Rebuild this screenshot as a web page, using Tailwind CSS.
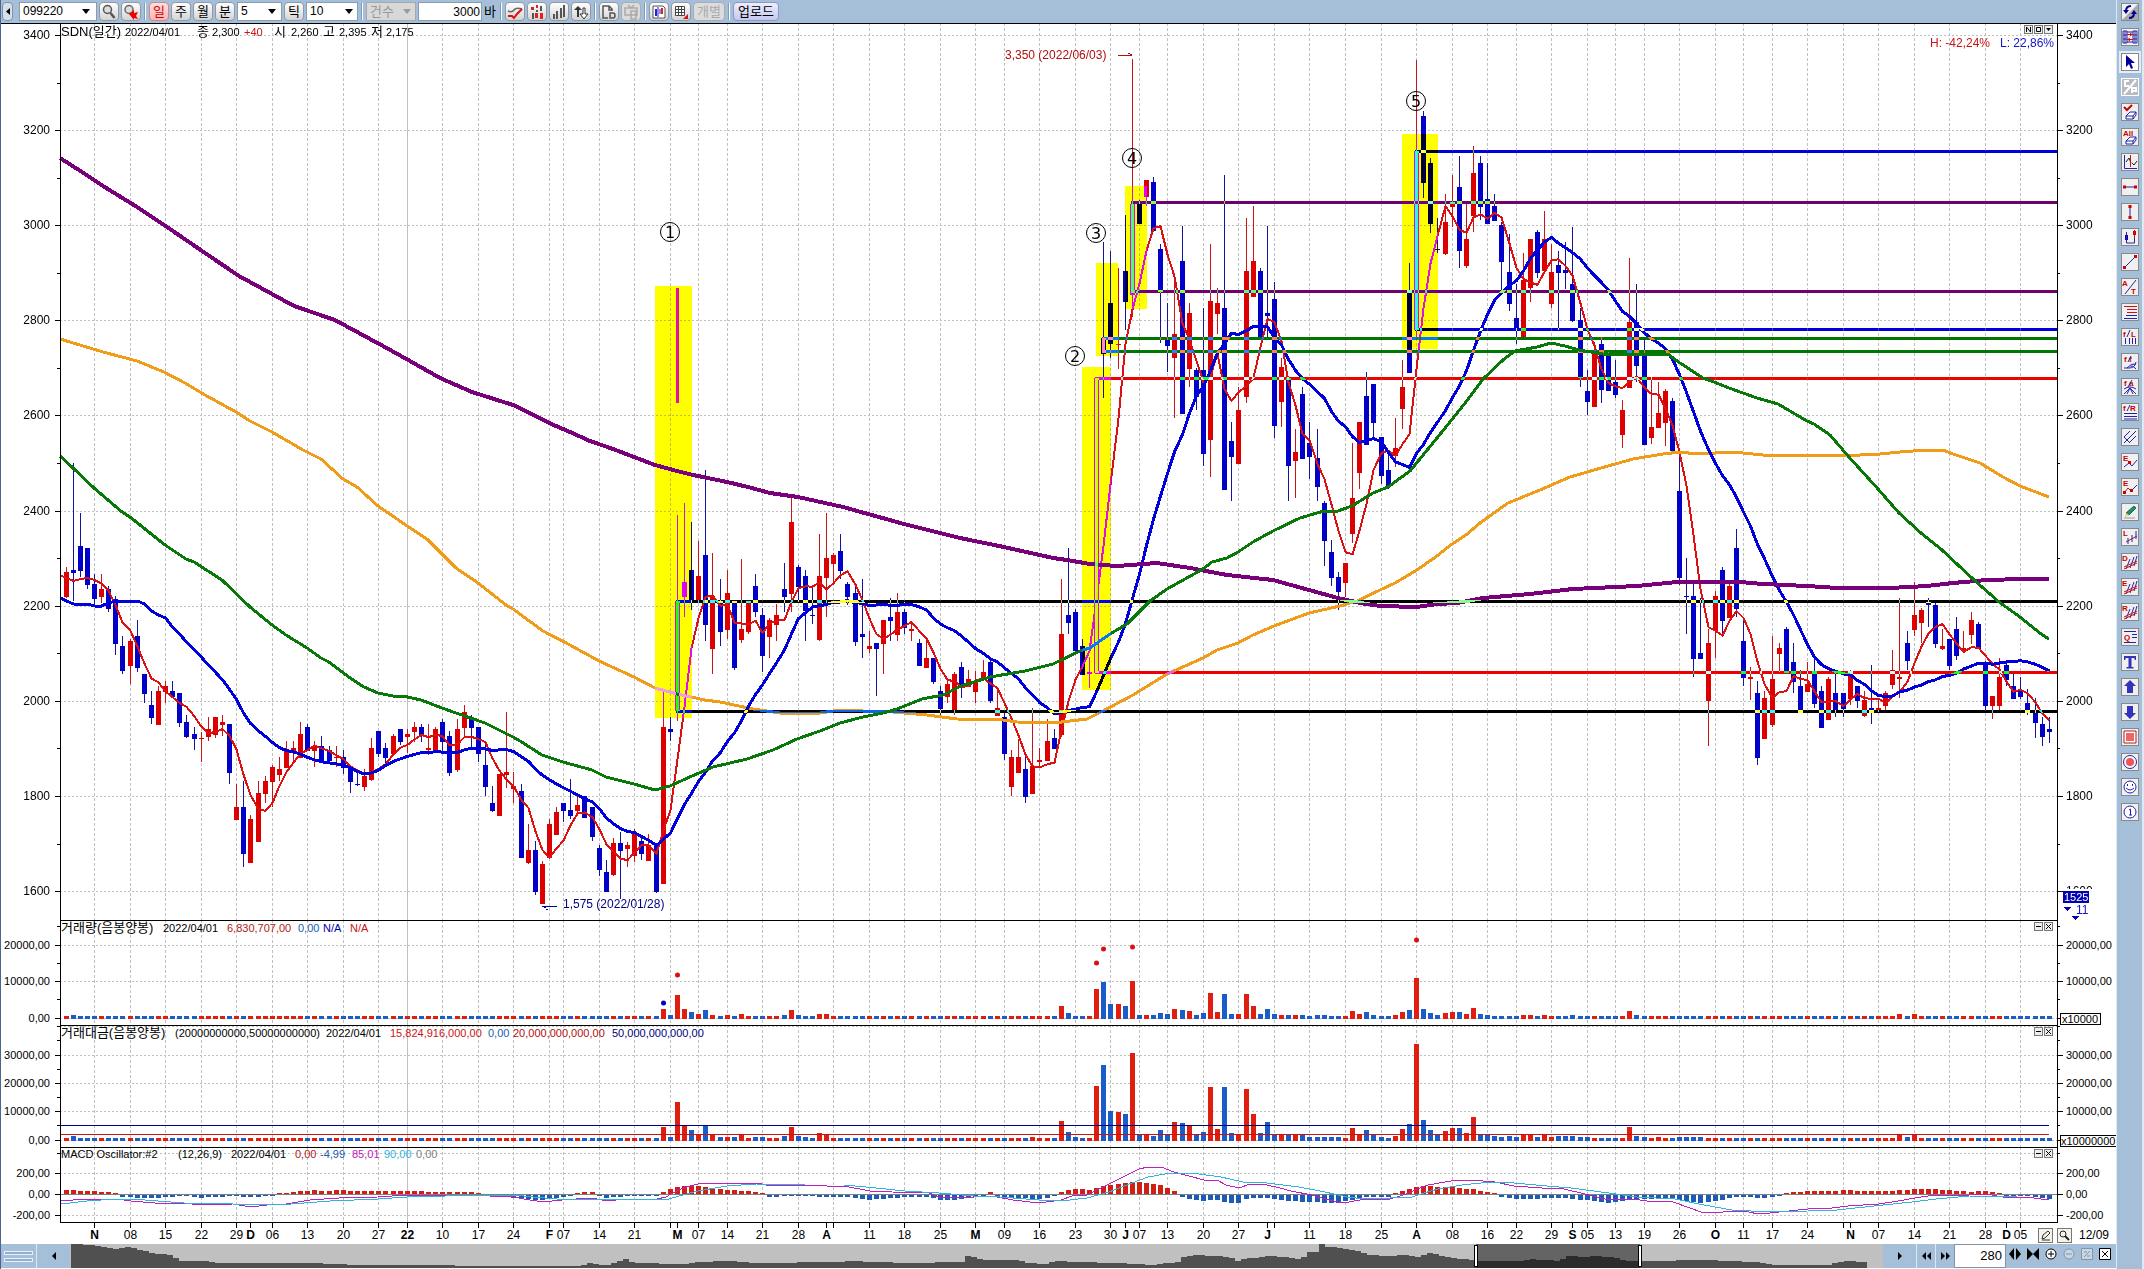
<!DOCTYPE html>
<html lang="ko">
<head>
    <meta charset="UTF-8">
    <meta name="viewport" content="width=device-width, initial-scale=1.0">
    <title>SDN 일간 차트</title>
    <script src="https://cdn.jsdelivr.net/npm/@tailwindcss/browser@4"></script>
</head>
<body class="flex min-h-screen items-stretch bg-white text-[11px] text-black [font-family:'Liberation_Sans','Noto_Sans_CJK_KR',sans-serif]">

    <main class="flex min-w-0 flex-1 flex-col border-l border-[#4a6590]">

        <!-- Toolbar -->
        <header class="flex h-[23px] items-center gap-[2px] bg-[#a5bfd9] pl-px text-[12px] leading-[17px]">
            <button aria-label="접기" class="mr-1 flex h-[19px] w-[11px] shrink-0 items-center justify-center rounded-sm border border-[#7d93ab] bg-[#d5e0ec]"><svg class="h-[7px] w-1" viewBox="0 0 4 7"><path d="M4 0v7L0 3.5z"/></svg></button>
            <label class="relative flex shrink-0"><span class="sr-only">종목코드</span>
                <select class="h-[19px] w-[78px] appearance-none border border-[#8a9cb0] bg-white pl-[3px]"><option>099220</option></select>
                <svg class="pointer-events-none absolute top-[7px] right-[7px] h-[5px] w-2" viewBox="0 0 8 5"><path d="M0 0h8L4 5z"/></svg></label>
            <button aria-label="종목검색" class="flex h-[19px] w-5 shrink-0 items-center justify-center rounded-sm border border-[#8e9aa8] bg-linear-to-b from-white to-[#d4d4d4]"><svg class="size-4" viewBox="0 0 16 16" fill="#dcdcdc" stroke="#555"><circle cx="6.5" cy="5.5" r="4" stroke-width="1.5"/><path d="M9.5 9l4 5" stroke-width="2.5"/></svg></button>
            <button aria-label="관심종목" class="flex h-[19px] w-5 shrink-0 items-center justify-center rounded-sm border border-[#8e9aa8] bg-linear-to-b from-white to-[#d4d4d4]"><svg class="size-4" viewBox="0 0 16 16"><circle cx="6" cy="5.500" r="4" fill="#dcdcdc" stroke="#666" stroke-width="1.500"/><path d="M6 10l5-4v3l4-1-2 4 2 3-4-1v2z" fill="#e00"/></svg></button>
            <span class="mx-px h-[17px] w-[2px] shrink-0 border-l border-[#7f9ab8] bg-white"></span>
            <button class="h-[19px] w-5 shrink-0 rounded-sm border border-[#c98a8a] bg-linear-to-b from-[#ffdede] to-[#ffb4b4] text-center text-[13px] text-[#c00]">일</button>
            <button class="h-[19px] w-5 shrink-0 rounded-sm border border-[#8e9aa8] bg-linear-to-b from-white to-[#d4d4d4] text-center text-[13px]">주</button>
            <button class="h-[19px] w-5 shrink-0 rounded-sm border border-[#8e9aa8] bg-linear-to-b from-white to-[#d4d4d4] text-center text-[13px]">월</button>
            <button class="h-[19px] w-5 shrink-0 rounded-sm border border-[#8e9aa8] bg-linear-to-b from-white to-[#d4d4d4] text-center text-[13px]">분</button>
            <label class="relative flex shrink-0"><span class="sr-only">분 단위</span>
                <select class="h-[19px] w-[45px] appearance-none border border-[#8a9cb0] bg-white pl-[3px]"><option>5</option></select>
                <svg class="pointer-events-none absolute top-[7px] right-[6px] h-[5px] w-2" viewBox="0 0 8 5"><path d="M0 0h8L4 5z"/></svg></label>
            <button class="h-[19px] w-5 shrink-0 rounded-sm border border-[#8e9aa8] bg-linear-to-b from-white to-[#d4d4d4] text-center text-[13px]">틱</button>
            <label class="relative flex shrink-0"><span class="sr-only">틱 단위</span>
                <select class="h-[19px] w-[52px] appearance-none border border-[#8a9cb0] bg-white pl-[3px]"><option>10</option></select>
                <svg class="pointer-events-none absolute top-[7px] right-[5px] h-[5px] w-2" viewBox="0 0 8 5"><path d="M0 0h8L4 5z"/></svg></label>
            <span class="mx-px h-[17px] w-[2px] shrink-0 border-l border-[#7f9ab8] bg-white"></span>
            <label class="relative flex shrink-0"><span class="sr-only">조회 기준</span>
                <select disabled class="h-[19px] w-[50px] appearance-none border border-[#a8a8a8] bg-[#d8d8d8] pl-[3px] text-[13px] text-[#999]"><option>건수</option></select>
                <svg class="pointer-events-none absolute top-[7px] right-[5px] h-[5px] w-2" viewBox="0 0 8 5"><path d="M0 0h8L4 5z" fill="#999"/></svg></label>
            <input id="bars" type="text" value="3000" class="h-[19px] w-16 shrink-0 border border-[#8a9cb0] bg-white pr-px text-right">
            <label for="bars" class="w-[13px] shrink-0 text-[13px]">바</label>
            <span class="mx-px h-[17px] w-[2px] shrink-0 border-l border-[#7f9ab8] bg-white"></span>
            <button aria-label="추세선" class="flex h-[19px] w-5 shrink-0 items-center justify-center rounded-sm border border-[#8e9aa8] bg-linear-to-b from-white to-[#d4d4d4]"><svg class="size-4" viewBox="0 0 16 16" fill="none"><path d="M1 7q4 2 6-1t8-1" stroke="#666" stroke-width="1.500"/><path d="M1 12h4l2 2 3-4 5-5" stroke="#d11" stroke-width="2"/></svg></button>
            <button aria-label="봉차트" class="flex h-[19px] w-5 shrink-0 items-center justify-center rounded-sm border border-[#8e9aa8] bg-linear-to-b from-white to-[#d4d4d4]"><svg class="size-4" viewBox="0 0 16 16"><path d="M3 9h2v6H3zM7 6h2v2H7zM11 2h2v5h-2z" fill="#555"/><path d="M2 3h3v3H2zM6 9h3v5H6zM11 9h3v6h-3zM7 1h2v3H7z" fill="#d22"/></svg></button>
            <button aria-label="거래량" class="flex h-[19px] w-5 shrink-0 items-center justify-center rounded-sm border border-[#8e9aa8] bg-linear-to-b from-white to-[#d4d4d4]"><svg class="size-4" viewBox="0 0 16 16" fill="#555"><path d="M2 10h2v5H2zM5 7h2v8H5zM9 4h2v10H9zM12 1h2v12h-2z"/></svg></button>
            <button aria-label="상하전환" class="flex h-[19px] w-5 shrink-0 items-center justify-center rounded-sm border border-[#8e9aa8] bg-linear-to-b from-white to-[#d4d4d4]"><svg class="size-4" viewBox="0 0 16 16"><path d="M5 2l4 4H6v7H4V6H1z" fill="#333"/><path d="M10 4h2v6h3l-4 5-4-5h3z" fill="#fff" stroke="#333"/></svg></button>
            <span class="mx-px h-[17px] w-[2px] shrink-0 border-l border-[#7f9ab8] bg-white"></span>
            <button aria-label="문서" class="flex h-[19px] w-5 shrink-0 items-center justify-center rounded-sm border border-[#8e9aa8] bg-linear-to-b from-white to-[#d4d4d4]"><svg class="size-4" viewBox="0 0 16 16" fill="none" stroke="#555" stroke-width="1.500"><path d="M7 14H2V2h6l3 3v2M8 2v4h3M9 9h3q2 0 2 2.500T12 14H9z"/></svg></button>
            <button disabled aria-label="방송" class="flex h-[19px] w-5 shrink-0 items-center justify-center rounded-sm border border-[#a3aebb] bg-[#dcdcdc]"><svg class="size-4" viewBox="0 0 16 16" fill="none" stroke="#aaa" stroke-width="1.500"><path d="M2 4h12v7H2zM5 1l3 3 3-3M8 7h5v8H8zM8 11h5"/></svg></button>
            <span class="mx-px h-[17px] w-[2px] shrink-0 border-l border-[#7f9ab8] bg-white"></span>
            <button aria-label="차트설정" class="flex h-[19px] w-5 shrink-0 items-center justify-center rounded-sm border border-[#8e9aa8] bg-linear-to-b from-white to-[#d4d4d4]"><svg class="size-4" viewBox="0 0 16 16"><path d="M2 2h10l2 2v10H2z" fill="#fff" stroke="#555"/><path d="M4 5h2v7H4z" fill="#22c"/><path d="M7 3v10M9 5v5" stroke="#22c"/><path d="M10 4h2v6h-2z" fill="#d22"/></svg></button>
            <button aria-label="표 보기" class="flex h-[19px] w-5 shrink-0 items-center justify-center rounded-sm border border-[#8e9aa8] bg-linear-to-b from-white to-[#d4d4d4]"><svg class="size-4" viewBox="0 0 16 16"><path d="M2.500 2.500h9v9h-9zM2.500 5.500h9M2.500 8.500h9M5.500 2.500v9M8.500 2.500v9" fill="#fff" stroke="#444"/><path d="M15 10v5h-5z" fill="#d11"/></svg></button>
            <button disabled class="h-[19px] w-8 shrink-0 rounded-sm border border-[#a3aebb] bg-[#dcdcdc] text-center text-[13px] text-[#aaa]">개별</button>
            <span class="mx-px h-[17px] w-[2px] shrink-0 border-l border-[#7f9ab8] bg-white"></span>
            <button class="h-[19px] w-[46px] shrink-0 rounded-sm border border-[#8f96c4] bg-linear-to-b from-[#eef] to-[#c3c8ee] text-center text-[13px]">업로드</button>
        </header>

        <!-- Price -->
        <section class="relative">
            <svg id="price" class="isolate block h-auto w-full text-[12px]" viewBox="1 23 2115 897" shape-rendering="crispEdges"></svg>
            <div class="absolute top-[2px] right-[63px] flex gap-px">
                <button aria-label="N" class="size-[9px] border border-[#777] bg-[#eee]"><svg class="size-full" viewBox="0 0 7 7" fill="none" stroke="#000"><path d="M1.500 6V1l4 5V1"/></svg></button>
                <button aria-label="최대화" class="size-[9px] border border-[#777] bg-[#eee]"><svg class="size-full" viewBox="0 0 7 7" fill="none" stroke="#000"><path d="M1.500 1.500h4v4h-4z"/></svg></button>
                <button aria-label="메뉴" class="size-[9px] border border-[#777] bg-[#eee]"><svg class="size-full" viewBox="0 0 7 7"><path d="M1 2h5L3.500 5z"/></svg></button>
            </div>
        </section>

        <!-- Volume -->
        <section class="relative">
            <svg id="volume" class="block h-auto w-full" viewBox="1 920 2115 105" shape-rendering="crispEdges"></svg>
            <div class="absolute top-[2px] right-[63px] flex gap-px">
                <button aria-label="최소화" class="size-[9px] border border-[#777] bg-[#eee]"><svg class="size-full" viewBox="0 0 7 7" stroke="#000"><path d="M1 3.500h5"/></svg></button>
                <button aria-label="닫기" class="size-[9px] border border-[#777] bg-[#eee]"><svg class="size-full" viewBox="0 0 7 7" stroke="#000"><path d="M1 1l5 5M6 1L1 6"/></svg></button>
            </div>
        </section>

        <!-- Turnover -->
        <section class="relative">
            <svg id="turnover" class="block h-auto w-full" viewBox="1 1025 2115 122" shape-rendering="crispEdges"></svg>
            <div class="absolute top-[2px] right-[63px] flex gap-px">
                <button aria-label="최소화" class="size-[9px] border border-[#777] bg-[#eee]"><svg class="size-full" viewBox="0 0 7 7" stroke="#000"><path d="M1 3.500h5"/></svg></button>
                <button aria-label="닫기" class="size-[9px] border border-[#777] bg-[#eee]"><svg class="size-full" viewBox="0 0 7 7" stroke="#000"><path d="M1 1l5 5M6 1L1 6"/></svg></button>
            </div>
        </section>

        <!-- MACD and time axis -->
        <section class="relative">
            <svg id="macd" class="block h-auto w-full" viewBox="1 1147 2115 97" shape-rendering="crispEdges"></svg>
            <div class="absolute top-[2px] right-[63px] flex gap-px">
                <button aria-label="최소화" class="size-[9px] border border-[#777] bg-[#eee]"><svg class="size-full" viewBox="0 0 7 7" stroke="#000"><path d="M1 3.500h5"/></svg></button>
                <button aria-label="닫기" class="size-[9px] border border-[#777] bg-[#eee]"><svg class="size-full" viewBox="0 0 7 7" stroke="#000"><path d="M1 1l5 5M6 1L1 6"/></svg></button>
            </div>
            <div class="absolute right-[44px] bottom-px flex gap-1">
                <button aria-label="그리기" class="size-[15px] border border-[#777] bg-[#f4f4ea]"><svg class="size-full" viewBox="0 0 13 13" fill="none" stroke="#333"><path d="M3 10l1-4 5-4 2 2-5 5zM3 11h8"/></svg></button>
                <button aria-label="돋보기" class="size-[15px] border border-[#777] bg-[#f4f4ea]"><svg class="size-full" viewBox="0 0 13 13" fill="none" stroke="#222"><circle cx="5" cy="5" r="3"/><path d="M7 7l4 4" stroke-width="2"/></svg></button>
            </div>
        </section>

        <!-- Range scroller -->
        <footer class="flex h-[25px] items-stretch border-b border-white bg-[#a5bfd9]">
            <div class="flex w-9 flex-col justify-center gap-[3px] border-r border-[#dce8f4] px-[3px]">
                <span class="h-1 border border-[#e8f0fa] bg-[#8fb0d4]"></span>
                <span class="h-1 border border-[#e8f0fa] bg-[#8fb0d4]"></span>
            </div>
            <button aria-label="왼쪽으로" class="flex w-[33px] items-center justify-center"><svg class="h-2 w-1" viewBox="0 0 4 8"><path d="M4 0v8L0 4z"/></svg></button>
            <svg id="overview" class="h-full min-w-0 flex-1 bg-[#c0c0c0]" viewBox="70 1244 1813 24" preserveAspectRatio="none" shape-rendering="crispEdges"></svg>
            <button aria-label="오른쪽으로" class="flex w-[33px] items-center justify-center"><svg class="h-2 w-1" viewBox="0 0 4 8"><path d="M0 0v8l4-4z"/></svg></button>
            <button aria-label="뒤로" class="flex w-[19px] items-center justify-center border-l border-[#dce8f4]"><svg class="h-2 w-[9px]" viewBox="0 0 9 8"><path d="M4 0v8L0 4zM9 0v8L5 4z"/></svg></button>
            <button aria-label="앞으로" class="flex w-[19px] items-center justify-center border-l border-[#dce8f4]"><svg class="h-2 w-[9px]" viewBox="0 0 9 8"><path d="M0 0v8l4-4zM5 0v8l4-4z"/></svg></button>
            <input aria-label="표시 봉 수" type="text" value="280" class="w-[52px] border border-[#7f93a8] bg-white pr-[3px] text-right text-[13px]">
            <div class="mr-[2px] flex pb-1">
                <button aria-label="넓게" class="flex w-[18px] items-center justify-center"><svg class="size-3" viewBox="0 0 12 12"><path d="M5 0v12L0 6zM7 0v12l5-6z"/></svg></button>
                <button aria-label="좁게" class="flex w-[18px] items-center justify-center"><svg class="size-3" viewBox="0 0 12 12"><path d="M0 0v12l6-6zM12 0v12L6 6z"/></svg></button>
                <button aria-label="확대" class="flex w-[18px] items-center justify-center"><svg class="size-3" viewBox="0 0 12 12" fill="#fff" stroke="#000"><circle cx="6" cy="6" r="5"/><path d="M3 6h6M6 3v6"/></svg></button>
                <button disabled aria-label="축소" class="flex w-[18px] items-center justify-center"><svg class="size-3" viewBox="0 0 12 12" fill="#c6d6e6" stroke="#8395a8"><circle cx="6" cy="6" r="5"/><path d="M3 6h6"/></svg></button>
                <button disabled aria-label="되돌리기" class="flex w-[18px] items-center justify-center"><svg class="size-3" viewBox="0 0 12 12" fill="#c6d6e6" stroke="#8395a8"><path d="M.5.500h11v11H.5zM3 9l6-6M3 4h3M6 8h3"/></svg></button>
                <button aria-label="닫기" class="flex w-[18px] items-center justify-center"><svg class="size-3" viewBox="0 0 12 12" fill="#fff" stroke="#000"><path d="M.5.500h11v11H.5zM3 3l6 6M9 3L3 9"/></svg></button>
            </div>
        </footer>
    </main>

    <!-- Drawing tools -->
    <aside id="tools" class="flex w-7 shrink-0 flex-col items-center gap-[7px] border-r-2 border-l border-[#dfe9f3] bg-[#a5bfd9] pt-[3px]"></aside>

    <script>
        // colour, high, body top, body bottom, low (chart units)
        const candles = `
r,567,572,597,598 b,463,570,573,601 b,513,546,571,577 b,548,548,585,589 b,574,584,599,604 r,574,589,597,603 b,586,589,609,612 b,596,599,644,655 b,636,646,671,674 r,639,641,666,684
b,620,636,668,672 b,674,674,694,703 b,691,705,718,724 r,686,691,725,725 r,681,686,692,703 b,681,691,697,698 b,693,693,723,727 b,715,722,737,738 b,727,734,739,750 r,732,738,739,762
r,717,729,737,741 r,717,717,735,738 r,715,722,725,736 b,724,724,773,784 r,784,807,820,820 b,781,807,854,867 r,815,819,863,863 r,781,793,842,842 r,776,781,794,803 r,765,767,782,807
r,757,769,775,781 r,741,749,768,768 r,741,748,751,763 r,722,734,758,758 b,724,727,751,751 r,741,746,751,767 b,736,746,763,763 b,746,750,761,761 r,746,757,758,767 b,750,757,768,774
b,767,768,782,793 b,770,784,785,786 r,769,776,787,791 r,738,748,780,781 b,731,731,754,757 b,743,748,758,763 r,734,736,754,754 b,729,729,742,745 r,729,734,737,753 r,722,727,732,742
b,724,727,735,742 r,724,748,750,755 r,727,729,753,753 b,719,722,742,752 b,731,736,773,776 r,719,729,770,772 r,705,712,728,736 b,715,719,728,747 b,727,727,754,762 b,741,765,787,796
b,786,803,811,812 r,774,774,816,816 r,712,772,775,788 r,772,786,789,803 b,784,791,858,858 r,824,850,863,864 b,841,850,892,895 r,861,864,904,904 r,819,824,858,858 r,807,812,835,835
b,803,803,811,822 b,779,810,816,819 r,797,805,811,813 b,796,796,818,818 b,807,807,837,841 b,845,848,870,876 b,860,872,892,892 r,838,843,875,876 b,832,843,851,899 r,842,845,849,867
r,829,832,856,862 b,837,841,854,860 r,834,845,861,861 b,844,844,892,893 r,691,727,884,884 b,717,729,732,741 r,515,601,711,721 r,503,582,597,617 b,522,570,600,610 r,541,576,600,603
b,470,555,625,641 r,553,596,649,674 b,579,601,632,646 r,570,593,630,639 b,601,601,668,670 r,559,629,640,643 r,601,601,632,634 b,574,586,612,617 b,608,615,656,672 r,618,620,637,658
r,604,615,625,641 b,563,589,597,612 r,495,522,594,612 b,565,567,587,602 b,570,576,611,641 b,586,615,616,624 r,534,576,640,641 r,513,558,578,617 r,553,555,564,582 b,534,551,571,579
b,582,584,597,605 b,586,593,642,646 b,579,634,637,658 r,631,646,649,653 b,643,643,649,696 r,620,620,644,674 b,598,617,621,641 r,593,612,635,641 b,609,612,628,634 r,622,629,631,641
b,639,643,666,666 r,638,658,668,668 b,658,658,682,684 b,686,691,709,715 r,679,684,697,703 r,672,674,710,715 b,662,667,685,698 r,670,679,687,687 r,671,681,692,703 r,660,672,680,680
b,660,662,701,703 r,690,708,716,716 b,713,717,754,760 r,750,757,787,796 r,739,757,773,773 b,755,769,797,803 r,708,766,794,794 r,748,760,762,767 r,719,741,761,761 b,729,738,749,749
r,579,634,735,737 b,548,615,623,634 b,609,612,651,651 b,639,646,675,675 r,657,672,674,688 r,378,378,673,673 b,242,338,354,398 b,251,303,344,358 r,268,344,345,369 b,215,271,302,330
r,59,204,295,317 b,200,204,224,224 r,180,180,197,206 b,177,182,231,231 b,244,249,292,343 b,303,340,346,372 r,278,334,358,418 b,226,261,414,414 r,303,313,369,387 b,368,370,397,410
b,308,370,454,466 r,244,301,440,477 r,288,303,314,334 b,175,308,490,490 b,422,441,457,501 r,387,410,464,464 r,218,271,397,403 r,206,261,297,297 b,268,271,337,337 b,226,313,316,337
b,282,299,426,438 r,358,367,402,427 b,378,378,466,501 r,429,452,461,498 b,387,394,459,459 b,422,443,457,479 b,429,458,487,501 b,501,503,541,566 b,540,552,578,586 b,572,577,592,610
r,563,563,583,597 r,443,498,534,543 r,422,422,473,489 b,372,396,445,445 b,384,384,423,440 b,437,437,476,484 b,452,470,487,489 r,418,448,456,467 r,360,387,409,429 b,263,290,373,373
r,60,151,330,340 b,111,116,183,198 b,158,163,224,233 b,218,249,250,253 r,194,222,254,255 r,175,202,207,227 b,156,187,251,268 r,204,239,266,268 r,146,173,216,232 b,156,163,207,220
b,163,199,224,224 b,194,206,221,221 b,222,225,262,291 b,234,272,304,311 b,284,318,328,344 r,253,280,337,337 r,239,239,288,302 b,230,232,273,278 r,211,239,271,271 r,244,272,304,308
b,251,265,273,330 b,242,270,273,289 b,227,284,321,322 b,308,320,378,387 b,370,391,402,415 r,342,354,407,407 b,337,344,390,403 b,352,356,391,391 b,360,382,395,398 r,400,410,435,448
r,258,322,388,388 b,284,322,366,382 b,340,354,445,445 r,377,427,438,444 r,382,413,428,428 r,389,391,423,446 b,398,401,451,451 b,451,491,578,585 b,558,596,597,634 b,582,596,659,677
b,598,653,659,659 r,629,643,701,746 r,591,596,631,658 b,567,570,621,634 r,582,586,618,618 b,529,548,609,617 b,617,641,678,686 r,667,677,679,700 b,681,693,758,765 r,691,698,739,739
r,636,679,725,727 r,643,648,654,672 b,627,629,673,673 b,643,662,682,693 b,670,686,713,713 r,662,684,692,692 b,658,671,704,708 b,686,691,728,728 r,677,679,720,720 b,670,693,710,717
b,693,693,709,717 r,670,671,699,705 b,686,686,701,708 r,691,700,716,717 b,665,708,713,724 r,700,708,710,712 r,691,693,706,710 r,650,670,685,689 r,598,677,679,698 b,631,643,661,670
r,582,615,630,636 r,608,610,623,643 b,598,602,605,627 b,603,605,644,648 r,629,646,649,650 b,639,639,666,670 b,617,629,656,660 r,631,648,651,652 r,612,620,635,644 b,622,624,649,649
b,661,662,706,710 r,696,696,706,719 r,658,677,706,710 b,662,665,680,686 b,674,686,699,699 b,677,691,697,699 b,689,703,713,715 b,698,713,723,738 b,717,724,737,746 b,717,729,732,743`
            .trim().split(/\s+/).map(s => s.split(",")).map(([c, ...v]) => ({ up: c === "r", v: v.map(Number) }));

        // long moving averages
        const ma60 = "60,456 73,468 94,488 122,512 130,517 165,545 186,559 194,562 222,580 250,607 272,625 286,635 307,648 321,658 329,662 350,678 364,687 378,693 393,696 403,696 421,700 442,708 456,713 485,723 513,737 520,741 542,755 563,762 592,770 606,777 634,784 655,790 670,786 692,776 713,767 747,759 773,750 797,739 820,731 840,723 863,717 883,713 897,709 922,699 943,695 961,686 990,677 1025,671 1053,664 1080,651 1090,648 1110,634 1127,624 1150,601 1167,589 1203,569 1212,562 1227,558 1238,552 1253,542 1273,531 1300,518 1324,511 1338,511 1352,506 1373,493 1388,487 1410,471 1437,438 1466,402 1483,379 1503,360 1515,351 1537,347 1551,343 1565,346 1579,350 1603,354 1668,354 1680,363 1703,378 1714,382 1729,388 1757,398 1778,404 1807,421 1814,424 1830,435 1849,457 1878,489 1899,513 1921,533 1942,550 1973,579 1999,602 2020,617 2041,634 2049,639";
        const ma120 = "60,339 103,352 137,361 164,372 185,383 205,395 236,412 250,421 272,432 303,450 321,459 343,479 357,487 378,506 397,519 407,526 427,539 456,568 478,583 506,605 513,609 543,631 570,645 599,661 634,677 655,688 677,694 705,700 720,702 753,709 780,713 813,714 840,710 863,711 893,712 927,715 957,719 1003,720 1017,722 1053,723 1087,719 1103,711 1133,695 1167,674 1203,658 1217,650 1238,643 1253,635 1274,626 1309,613 1340,606 1357,601 1380,590 1395,583 1417,570 1437,556 1452,544 1466,535 1480,523 1508,503 1540,490 1570,477 1601,468 1633,459 1663,454 1680,452 1697,454 1733,452 1763,455 1807,455 1833,456 1860,455 1880,454 1900,452 1927,450 1943,450 1953,454 1980,463 2003,477 2020,486 2049,497";
        const ma240 = "60,158 82,172 103,186 137,207 170,229 205,253 239,276 294,306 335,320 383,346 410,361 440,378 472,392 497,400 513,405 528,412 549,423 570,432 590,441 613,449 634,457 655,465 677,471 693,475 727,482 748,487 770,493 798,497 843,507 904,524 960,538 1004,547 1053,558 1067,560 1090,564 1117,566 1157,563 1190,568 1227,575 1273,580 1309,590 1338,598 1360,603 1380,606 1417,607 1437,604 1457,603 1483,598 1530,594 1573,589 1637,586 1677,582 1740,582 1763,584 1807,586 1837,588 1890,588 1927,586 1953,583 1987,580 2023,579 2049,579";
        const macdLine = "61,1201 85,1199 116,1199 131,1201 155,1203 184,1203 199,1205 233,1204 245,1206 259,1206 267,1205 286,1204 310,1200 339,1198 378,1197 407,1195 446,1195 477,1195 490,1196 516,1197 524,1199 543,1202 562,1200 591,1198 608,1201 625,1199 657,1199 666,1197 671,1194 683,1188 698,1184 717,1183 757,1183 766,1185 805,1185 827,1186 844,1186 870,1191 892,1192 929,1193 939,1197 957,1198 992,1196 1013,1200 1039,1203 1061,1200 1075,1195 1087,1195 1109,1184 1139,1169 1148,1167 1161,1167 1174,1172 1189,1176 1204,1180 1217,1180 1226,1185 1239,1188 1250,1184 1267,1185 1280,1188 1291,1191 1312,1195 1325,1199 1338,1202 1349,1202 1360,1200 1390,1199 1400,1196 1409,1193 1417,1189 1428,1185 1451,1181 1471,1180 1495,1182 1514,1186 1542,1188 1564,1189 1585,1194 1609,1200 1632,1199 1647,1201 1673,1202 1687,1207 1701,1212 1723,1212 1732,1211 1749,1212 1758,1214 1770,1213 1808,1209 1832,1208 1848,1206 1879,1204 1898,1201 1915,1198 1934,1195 1969,1195 1986,1194 2003,1197 2026,1197 2049,1200";
        const signalLine = "61,1204 87,1201 116,1199 145,1200 184,1203 233,1204 262,1205 291,1204 330,1201 378,1199 407,1197 446,1196 514,1195 533,1197 557,1199 654,1199 669,1199 679,1196 698,1191 727,1186 756,1184 805,1185 844,1185 866,1187 905,1191 939,1193 974,1196 1000,1197 1039,1200 1061,1201 1087,1198 1109,1192 1132,1183 1148,1177 1165,1174 1191,1173 1221,1177 1243,1182 1267,1183 1299,1187 1325,1192 1347,1197 1364,1199 1390,1198 1412,1197 1424,1193 1438,1189 1462,1185 1490,1182 1514,1183 1547,1186 1571,1188 1609,1193 1637,1197 1675,1199 1704,1205 1732,1210 1770,1212 1808,1211 1837,1210 1874,1206 1912,1202 1936,1199 1969,1196 2017,1197 2049,1197";

        // bar tops that rise above the baseline, by bar index
        const volumes = { 1: 1015, 84: 1009, 85: 1015, 86: 995, 87: 1009, 88: 1012, 89: 1014, 90: 1010, 91: 1015, 93: 1015, 95: 1014, 101: 1015, 102: 1010, 103: 1015, 106: 1014, 107: 1014, 140: 1006, 141: 1013, 145: 989, 146: 982, 147: 1004, 148: 1004, 149: 1006, 150: 981, 151: 1015, 152: 1015, 153: 1015, 154: 1013, 155: 1014, 156: 1009, 157: 1010, 158: 1011, 159: 1015, 160: 1013, 161: 993, 162: 1012, 163: 994, 164: 1014, 165: 1014, 166: 994, 167: 1006, 168: 1014, 169: 1009, 170: 1014, 171: 1015, 172: 1015, 173: 1015, 174: 1015, 176: 1015, 177: 1015, 181: 1011, 182: 1014, 183: 1012, 184: 1015, 187: 1015, 188: 1012, 189: 1010, 190: 978, 191: 1009, 192: 1013, 193: 1015, 194: 1013, 195: 1012, 196: 1012, 197: 1014, 198: 1008, 199: 1014, 200: 1015, 205: 1015, 206: 1015, 208: 1015, 212: 1015, 220: 1011, 221: 1015, 258: 1014, 260: 1014 };
        const turnover = { 1: 1136, 84: 1127, 85: 1137, 86: 1102, 87: 1125, 88: 1130, 89: 1134, 90: 1125, 91: 1134, 92: 1137, 93: 1137, 94: 1137, 95: 1134, 97: 1137, 98: 1137, 101: 1136, 102: 1127, 103: 1136, 104: 1137, 106: 1133, 107: 1134, 136: 1137, 140: 1121, 141: 1132, 142: 1137, 145: 1086, 146: 1065, 147: 1111, 148: 1112, 149: 1114, 150: 1053, 151: 1135, 152: 1134, 153: 1136, 154: 1130, 155: 1135, 156: 1122, 157: 1123, 158: 1126, 159: 1135, 160: 1132, 161: 1087, 162: 1129, 163: 1087, 164: 1133, 165: 1134, 166: 1089, 167: 1114, 168: 1133, 169: 1122, 170: 1134, 171: 1134, 172: 1134, 173: 1135, 174: 1135, 175: 1137, 176: 1137, 177: 1137, 178: 1137, 179: 1137, 181: 1128, 182: 1134, 183: 1130, 184: 1135, 185: 1137, 187: 1136, 188: 1129, 189: 1124, 190: 1044, 191: 1120, 192: 1130, 193: 1135, 194: 1131, 195: 1128, 196: 1128, 197: 1133, 198: 1117, 199: 1135, 200: 1135, 201: 1136, 202: 1137, 203: 1136, 204: 1137, 205: 1134, 206: 1134, 207: 1137, 208: 1134, 209: 1137, 210: 1136, 211: 1136, 212: 1136, 213: 1137, 214: 1137, 220: 1127, 221: 1136, 222: 1137, 224: 1137, 227: 1137, 228: 1137, 229: 1137, 230: 1137, 258: 1134, 259: 1137, 260: 1134 };

        // bar index, label, grid line (0 none, 1 dashed, 2 solid)
        const dates = [[4,"N",1],[9,"08",1],[14,"15",1],[19,"22",1],[24,"29",1],[26,"D",0],[29,"06",1],[34,"13",1],[39,"20",1],[44,"27",1],[48,"22",2],[53,"10",1],[58,"17",1],[63,"24",1],[68,"F",1],[70,"07",1],[75,"14",1],[80,"21",1],[85,"",1],[86,"M",0],[89,"07",1],[93,"14",1],[98,"21",1],[103,"28",1],[107,"A",0],[108,"",1],[113,"11",1],[118,"18",1],[123,"25",1],[128,"M",1],[132,"09",1],[137,"16",1],[142,"23",1],[147,"30",1],[149,"J",0],[151,"07",1],[155,"13",1],[160,"20",1],[165,"27",1],[169,"J",0],[170,"",1],[175,"11",1],[180,"18",1],[185,"25",1],[190,"A",1],[195,"08",1],[200,"16",1],[204,"22",1],[209,"29",1],[212,"S",0],[214,"05",1],[218,"13",1],[222,"19",1],[227,"26",1],[232,"O",1],[236,"11",1],[240,"17",1],[245,"24",1],[250,"",1],[251,"N",0],[255,"07",1],[260,"14",1],[265,"21",1],[270,"28",1],[273,"D",0],[275,"05",1]];

        const L = 60, R = 2057;
        const barX = i => Math.floor(66.1 + 7.108 * i);
        const rect = (x, y, w, h, fill, extra = "") => `<rect x="${x}" y="${y}" width="${w}" height="${h}" fill="${fill}" ${extra}/>`;
        const line = (pts, color, w) => `<polyline points="${pts}" fill="none" stroke="${color}" stroke-width="${w}" stroke-linejoin="round"/>`;
        const text = (x, y, s, attrs = "") => `<text x="${x}" y="${y}" ${attrs}>${s}</text>`;

        function frame(top, bottom, grid, majors, minors) {
            let s = rect(1, top, 2115, bottom - top, "#fff");
            dates.forEach(([i, , g]) => {
                if (g) s += `<path d="M${barX(i) + .5} ${top}V${bottom}" stroke="#c0c0c0" ${g === 1 ? 'stroke-dasharray="3 2"' : ""}/>`;
            });
            grid.forEach(y => { s += `<path d="M${L} ${y + .5}H${R}" stroke="#c0c0c0" stroke-dasharray="2 2"/>`; });
            majors.forEach(([y, label]) => {
                s += rect(L - 5, y, 5, 1, "#000") + rect(R, y, 6, 1, "#000");
                s += text(50, y + 4, label, 'text-anchor="end"') + text(2066, y + 4, label);
            });
            minors.forEach(y => { s += rect(L - 3, y, 3, 1, "#000") + rect(R, y, 3, 1, "#000"); });
            return s;
        }
        const axes = (top, bottom) => rect(L, top, 1, bottom - top, "#000") + rect(R, top, 1, bottom - top, "#000") + rect(L, top, R - L, 1, "#000");

        // pane caption: [x, string, colour]
        const caption = (y, parts) => parts.map(([x, s, c]) => text(x, y, s, `fill="${c || "#000"}" class="${/[가-힣]/.test(s) ? "text-[13px]" : "text-[11px]"}"`)).join("");

        function average(n, lead) {
            const close = candles.map(c => c.up ? c.v[1] : c.v[2]);
            const pts = ["60," + lead[0]];
            candles.forEach((c, i) => {
                const y = i < n - 1 ? lead[i + 1] : close.slice(i - n + 1, i + 1).reduce((a, b) => a + b) / n;
                pts.push(`${barX(i) + .5},${y.toFixed(1)}`);
            });
            return pts.join(" ");
        }

        function drawPrice() {
            const majors = [3400, 3200, 3000, 2800, 2600, 2400, 2200, 2000, 1800, 1600].map(p => [Math.round(35 + (3400 - p) * .4756), p]);
            const minors = [3300, 3100, 2900, 2700, 2500, 2300, 2100, 1900, 1700].map(p => Math.round(35 + (3400 - p) * .4756));
            let s = '<clipPath id="plot"><rect x="60" y="23" width="1997" height="897"/></clipPath>';
            s += frame(23, 920, majors.map(m => m[0]), majors, minors);
            candles.forEach((c, i) => {
                const [h, t, b, l] = c.v, x = barX(i);
                s += rect(x, h, 1, Math.max(l - h, 1), c.up ? "#c81414" : "#1414a0");
                s += rect(x - 2, t, 5, Math.max(b - t, 1), c.up ? "#dc0000" : "#0000c8");
            });
            s += line(average(5, [575, 578, 581, 579, 578]), "#dc1010", 2);
            s += line(ma120, "#f09c18", 3);
            s += line(average(20, [598, 601, 604, 604, 604, 606, 606, 603, 601, 602, 601, 601, 604, 611, 615, 618, 627, 634, 642, 650]), "#0000dc", 3);
            s += line(ma240, "#780078", 4);

            // level boxes and highlights are inverted against whatever lies below
            const invert = 'class="mix-blend-difference"';
            [[677, 601, 711, "#ffffff"], [1096, 378, 672, "#11ffff"], [1103, 338, 351, "#ff87ff"], [1132, 202, 291, "#8fff8f"], [1416, 151, 329, "#ffff23"]]
                .forEach(([x, t, b, c]) => {
                    s += `<g clip-path="url(#plot)" ${invert}><rect x="${x + .5}" y="${t + .5}" width="1500" height="${b - t}" fill="none" stroke="${c}" stroke-width="3"/></g>`;
                });
            s += line(ma60, "#087808", 3);
            [[655, 286, 37, 432], [1082, 367, 29, 323], [1096, 263, 22, 93], [1125, 186, 22, 123], [1402, 134, 36, 215]]
                .forEach(([x, y, w, h]) => { s += rect(x, y, w, h, "#0000ff", invert); });
            s += rect(676, 288, 3, 115, "#e010a8");

            [[670, 232, 1], [1075, 356, 2], [1096, 233, 3], [1132, 158, 4], [1416, 101, 5]].forEach(([x, y, n]) => {
                s += `<circle cx="${x}" cy="${y}" r="9.500" fill="none" stroke="#000" shape-rendering="auto"/>`;
                s += text(x, y + 6, n, `text-anchor="middle" class="text-[16px] [font-family:'DejaVu_Sans',sans-serif]"`);
            });

            s += rect(1, 23, 2115, 1, "#000") + axes(23, 920);
            s += caption(36, [[61, "SDN(일간)"], [125, "2022/04/01"], [197, "종"], [212, "2,300"], [244, "+40", "#c81414"], [274, "시"], [291, "2,260"], [323, "고"], [339, "2,395"], [371, "저"], [386, "2,175"]]);
            s += text(1930, 47, "H: -42,24%", 'fill="#c81414"') + text(2000, 47, "L: 22,86%", 'fill="#1414c8"');
            s += text(1005, 59, "3,350 (2022/06/03)", 'fill="#b01010"');
            s += '<path d="M1118 55.500h14M1128 53.500h2M1130 54.500h2" stroke="#b01010"/>';
            s += text(563, 908, "1,575 (2022/01/28)", 'fill="#000080"');
            s += '<path d="M542 906.500h15M544 907.500h2M546 909.500h2" stroke="#000080"/>';

            s += rect(2063, 889, 40, 31, "#fff") + rect(2063, 891, 26, 12, "#0000b4");
            s += text(2064, 901, "1525", 'fill="#fff" class="text-[11px]"') + text(2076, 914, "11", 'fill="#1414c8"');
            s += '<path d="M2063 907h9l-4.500 4zM2071 916h9l-4.500 4z" fill="#0000b4"/>';
            document.getElementById("price").innerHTML = s;
        }

        function drawBars(tops, min, base) {
            return candles.map((c, i) => {
                const t = tops[i] || min;
                return rect(barX(i) - 2, t, 5, base - t, c.up ? "#e01e10" : "#1a5cc8");
            }).join("");
        }

        function drawVolume() {
            let s = frame(920, 1025, [945, 981, 1018], [[945, "20000,00"], [981, "10000,00"], [1018, "0,00"]], [926, 963, 999]);
            s += drawBars(volumes, 1016, 1019);
            [[84, 1003, "#0000c8"], [86, 975], [145, 963], [146, 949], [150, 947], [190, 940]].forEach(([i, y, c]) => {
                s += `<circle cx="${barX(i) + .5}" cy="${y}" r="2.500" fill="${c || "#dc1010"}" shape-rendering="auto"/>`;
            });
            s += axes(920, 1025);
            s += caption(932, [[61, "거래량(음봉양봉)"], [163, "2022/04/01"], [227, "6,830,707,00", "#b02014"], [298, "0,00", "#2060b0"], [323, "N/A", "#0000a0"], [350, "N/A", "#c81414"]]);
            s += rect(2060.5, 1013.5, 40, 11, "#fff", 'stroke="#000"') + text(2062, 1023, "x10000");
            document.getElementById("volume").innerHTML = s;
        }

        function drawTurnover() {
            let s = frame(1025, 1147, [1026, 1055, 1083, 1111, 1140], [[1055, "30000,00"], [1083, "20000,00"], [1111, "10000,00"], [1140, "0,00"]], [1026, 1040, 1069, 1097, 1125]);
            s += drawBars(turnover, 1138, 1141);
            s += rect(61, 1125, 1988, 1, "#000080") + rect(61, 1134, 1988, 1, "#c81414");
            s += axes(1025, 1147);
            s += caption(1037, [[61, "거래대금(음봉양봉)"], [175, "(20000000000,50000000000)"], [326, "2022/04/01"], [390, "15,824,916,000,00", "#c81414"], [488, "0,00", "#2060b0"], [513, "20,000,000,000,00", "#b01010"], [612, "50,000,000,000,00", "#000080"]]);
            s += rect(2060.5, 1135.5, 60, 11, "#fff", 'stroke="#000"') + text(2061, 1145, "x10000000");
            document.getElementById("turnover").innerHTML = s;
        }

        function valueAt(pts, x) {
            for (let k = 1; k < pts.length; k++) {
                if (x <= pts[k][0]) {
                    const [x0, y0] = pts[k - 1], [x1, y1] = pts[k];
                    return y0 + (y1 - y0) * (x - x0) / (x1 - x0);
                }
            }
            return pts[pts.length - 1][1];
        }

        function drawMacd() {
            let s = frame(1147, 1222, [1153, 1173, 1215], [[1173, "200,00"], [1194, "0,00"], [1215, "-200,00"]], [1153]);
            s += rect(1, 1222, 2115, 22, "#fff");
            const parse = str => str.split(" ").map(p => p.split(",").map(Number));
            const m = parse(macdLine), g = parse(signalLine);
            candles.forEach((c, i) => {
                const x = barX(i), d = valueAt(g, x) - valueAt(m, x);
                const h = Math.round(Math.abs(d)) + 1;
                s += d > 0 ? rect(x - 2, 1194 - h, 5, h, "#d02014") : rect(x - 2, 1195, 5, h, "#1a5cb8");
            });
            s += rect(61, 1194, 1996, 1, "#808080");
            s += line(macdLine, "#c020c0", 1) + line(signalLine, "#30b4dc", 1);
            s += axes(1147, 1222) + rect(L, 1222, R - L + 1, 1, "#000");
            dates.forEach(([i, label, grid]) => {
                s += rect(barX(i), 1223, 1, 5, "#000");
                const bold = grid === 2 || /[A-Z]/.test(label);
                s += text(barX(i) + .5, 1239, label, `text-anchor="middle" class="text-[12px] ${bold ? "font-bold" : ""}"`);
            });
            s += text(2079, 1239, "12/09", 'class="text-[12px]"');
            s += caption(1158, [[61, "MACD Oscillator:#2"], [178, "(12,26,9)"], [231, "2022/04/01"], [295, "0,00", "#b02014"], [320, "-4,99", "#2060b0"], [352, "85,01", "#c020c0"], [384, "90,00", "#30b4dc"], [416, "0,00", "#808080"]]);
            document.getElementById("macd").innerHTML = s;
        }

        function drawOverview() {
            const shape = "71,24 83,23 97,22 109,19 126,21 141,17 153,14 172,13 174,7 204,7 213,5 310,5 359,3 436,3 465,2 577,2 589,5 601,2 613,6 625,9 630,5 679,4 698,6 727,7 740,6 749,5 835,6 848,7 905,5 959,6 960,10 966,12 983,8 1017,8 1024,5 1044,4 1052,7 1078,6 1113,5 1148,3 1178,6 1179,10 1191,13 1213,12 1230,10 1239,5 1241,9 1260,11 1269,12 1299,9 1308,17 1317,15 1319,24 1325,21 1338,20 1354,17 1367,13 1386,12 1400,13 1414,11 1428,15 1440,12 1452,10 1471,8 1478,7 1519,7 1528,9 1557,7 1564,12 1580,11 1595,12 1614,10 1623,7 1647,7 1704,8 1751,6 1770,3 1827,3 1837,6 1851,7 1867,5"
                .split(" ").map(p => p.split(",").map(Number));
            const bars = (from, to, fill) => {
                let out = "";
                for (let x = from; x < to; x += 6) {
                    const h = Math.round(valueAt(shape, x));
                    out += rect(x, 1268 - h, Math.min(6, to - x), h, fill);
                }
                return out;
            };
            let s = bars(71, 1476, "#505050") + bars(1640, 1867, "#505050");
            s += rect(1476, 1244, 164, 24, "#646464") + bars(1476, 1640, "#2c2c2c");
            [1475, 1639].forEach(x => { s += rect(x - 1, 1245, 4, 22, "#000") + rect(x, 1246, 2, 20, "#fff"); });
            document.getElementById("overview").innerHTML = s;
        }

        // drawing tool icons on a 16 unit grid
        const letter = (s, x = 1, y = 8) => `<text x="${x}" y="${y}" fill="#c00" class="text-[8px] font-bold">${s}</text>`;
        const b = d => `<path d="${d}" fill="none" stroke="#22a"/>`;
        const r = d => `<path d="${d}" fill="none" stroke="#c11"/>`;
        const dot = (x, y) => `<rect x="${x}" y="${y}" width="3" height="3" fill="#c00"/>`;
        const hatch = b("M4 15l4-10M8 14l4-11M12 12l3-10") + r("M2 13l13-6M2 15l13-6");
        const eraser = '<path d="M4 12l4-4h6l-3 4zM4 12v3h7v-3M11 15l3-4V8" fill="#fff" stroke="#22a"/>';
        const tools = [
            ["새로고침", '<path d="M16 0v16H0z" fill="#aaa"/><path d="M9 2q-5 0-5 5M7 14q5 0 5-5" fill="none" stroke="#009" stroke-width="2"/><path d="M1 6h6l-3 4zM9 10h6l-3-4z" fill="#009"/>'],
            ["차트틀", b("M1 2h4v12H1zM11 2h4v12h-4zM3 2v12M13 2v12M5 3h6M5 13h6M1 6h4M1 10h4M11 6h4M11 10h4") + r("M5 5.500h6M5 10.500h6M8 4l2 1.500L8 7M8 9l-2 1.500L8 12")],
            ["선택", '<path d="M4 1l9 8H9l2 5-2 1-2-5-3 3z" fill="#009"/>'],
            ["퍼센트", '<path d="M14 1L2 15M7 2H3v5h4M10 14V9h4v3h-4" fill="none" stroke="#fff" stroke-width="2"/>'],
            ["선택 지우기", eraser + '<path d="M2 3l3 3 5-5" fill="none" stroke="#c00" stroke-width="2"/>'],
            ["모두 지우기", eraser + letter("All", 1, 7)],
            ["추세", b("M2.500 1v13.500H15") + '<path d="M4 8l3-4 2 5M10 9l2 2 3-4" fill="none" stroke="#222"/>' + r("M8.500 1v12")],
            ["가로선", b("M3 8h10") + dot(1, 6.5) + dot(12, 6.5)],
            ["세로선", b("M8 3v10") + dot(6.5, 1) + dot(6.5, 12)],
            ["봉 비교", '<path d="M3 6h3v5H3z" fill="#00b"/><path d="M11 2h3v4h-3z" fill="#c00"/>' + b("M4.500 3v11h8V9") + r("M12.500 1v8")],
            ["추세선", b("M3 13L13 3") + dot(1, 12) + dot(12, 1)],
            ["각도", b("M3 15L14 1") + letter("A", 0, 7) + letter("T", 9, 15)],
            ["되돌림", r("M2 2.500h13M5 5.500h10M5 8.500h10") + b("M4 11.500h11M2 14.500h13")],
            ["피보나치 시간", letter("f", 1) + letter("L", 9) + b("M5 8l3-7M3.500 9v6M7.500 9v6M10.500 9v6M13.500 9v6")],
            ["피보나치 호", letter("f f", 2) + b("M6 8l3-6M2 14h5q6 0 7-6M5 14q4-5 9-4M9 13q0-3 5 2")],
            ["피보나치 팬", letter("f a", 2, 7) + b("M6 8l4-7M2 15l6-6 6 6M5 15l3-6 3 6M2 10q6-4 12 0")],
            ["되돌림선", letter("f", 1, 7) + letter("R", 8, 7) + b("M5 7l3-6M2 9.500h13M2 12.500h13M2 15h13")],
            ["평행선", b("M2 8l6-6M2 14L14 2M7 14l7-7M2 8l6 6")],
            ["엘리엇 1", letter("E", 1, 7) + b("M2 13l5-4 3 3 5-6") + dot(6, 7)],
            ["엘리엇 2", letter("E", 1, 7) + r("M2 14l4-5 3 3") + b("M9 12l6-6") + dot(8, 10) + dot(1, 12)],
            ["연필", '<path d="M12 2l2 2-7 7-3-2z" fill="#2a8a6a" stroke="#175"/><path d="M4 9l3 2-4 2z" fill="#e8d060"/><path d="M2 14h11" stroke="#999"/>'],
            ["L 채널", letter("L", 1, 7) + r("M4 13l11-6") + b("M6 15V9M10 13V6M14 10V2")],
            ["D 채널", hatch + letter("D", 0, 7)],
            ["E 채널", hatch + letter("E", 0, 7)],
            ["R 채널", hatch + letter("R", 0, 7)],
            ["Q 라인", b("M2 2.500h12M10 5.500h5M10 8.500h5M2 13.500h12") + letter("Q", 2, 11)],
            ["텍스트", '<path d="M2 2h12v4h-1l-1-2H9.500v9h2v1.500h-7V13h2V4H4L3 6H2z" fill="#33b"/>'],
            ["위 화살표", '<path d="M8 1l6 6h-3v7H5V7H2z" fill="#33b"/>'],
            ["아래 화살표", '<path d="M8 15l6-6h-3V2H5v7H2z" fill="#33b"/>'],
            ["사각형", '<path d="M2 2h12v12H2z" fill="#fff" stroke="#a22"/><path d="M4 4h8v8H4z" fill="#e66"/>'],
            ["원", '<circle cx="8" cy="8" r="6.500" fill="#fff" stroke="#22a"/><circle cx="8" cy="8" r="4" fill="#e55"/>'],
            ["스마일", '<circle cx="8" cy="8" r="6" fill="#fff" stroke="#22a"/><path d="M5.500 5v2M10.500 5v2M4 9q4 4 8 0" fill="none" stroke="#22a"/>'],
            ["번호", '<circle cx="8" cy="8" r="6" fill="#fff" stroke="#22a"/><path d="M7 6l1.500-1v6M7 11h3" fill="none" stroke="#22a"/>']
        ];
        document.getElementById("tools").innerHTML = tools.map(([name, art], i) => {
            const look = i === 2 ? "border-[#888] bg-white outline-2 outline-[#e4edf6]" : i === 3 ? "border-white bg-[#b8bcc0]" : "border-[#888] bg-[#f0f0f0]";
            return `<button aria-label="${name}" class="size-[18px] shrink-0 border ${look}"><svg class="size-4" viewBox="0 0 16 16">${art}</svg></button>`;
        }).join("");

        drawPrice();
        drawVolume();
        drawTurnover();
        drawMacd();
        drawOverview();
    </script>
</body>
</html>
